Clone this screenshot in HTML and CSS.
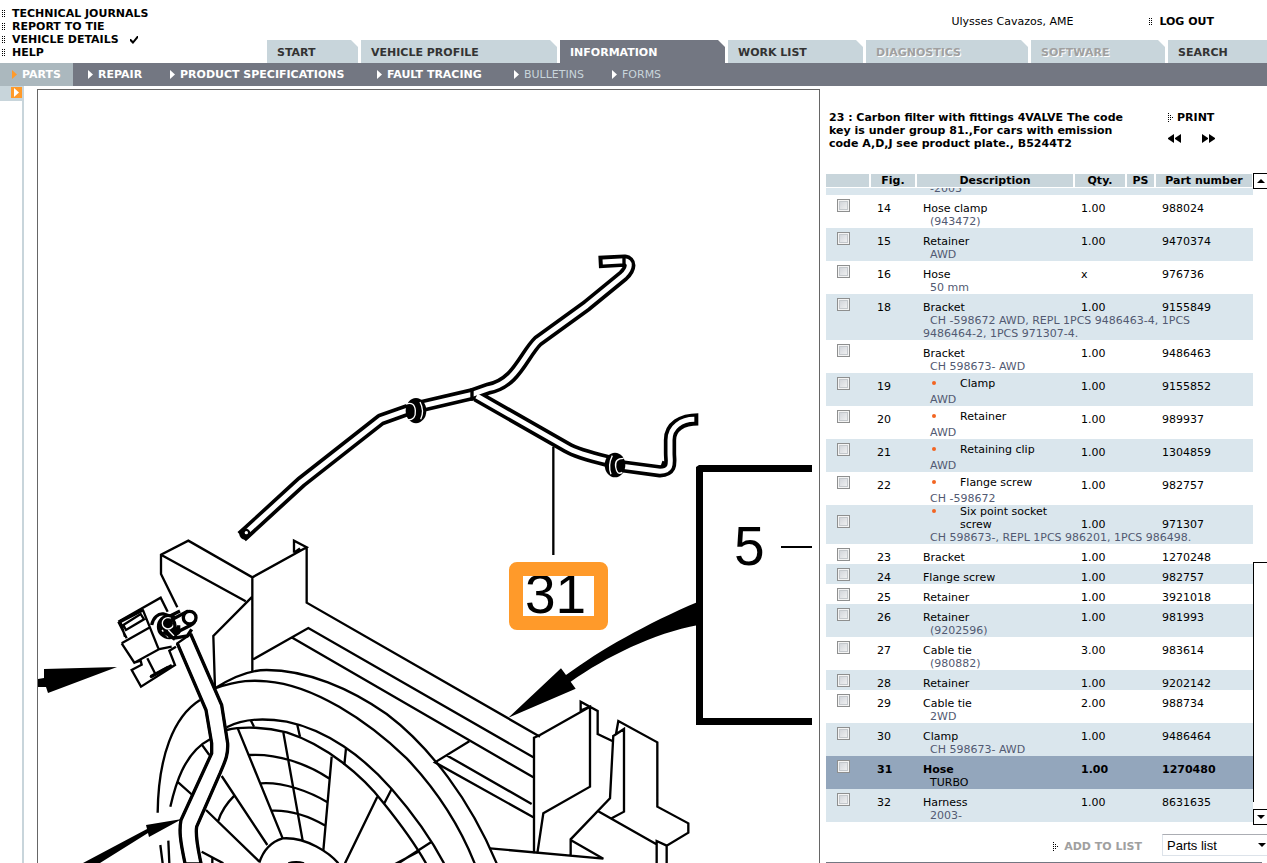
FILE: index.html
```html
<!DOCTYPE html>
<html lang="en">
<head>
<meta charset="utf-8">
<title>Parts information</title>
<link rel="stylesheet" href="styles.css">
</head>
<body>
<svg class="defs" aria-hidden="true">
  <symbol id="grip" viewBox="0 0 4 8"><path d="M0 0h1v1H0zM2 0h1v1H2zM0 2h1v1H0zM2 2h1v1H2zM0 4h1v1H0zM2 4h1v1H2zM0 6h1v1H0zM2 6h1v1H2z"/></symbol>
  <symbol id="dots" viewBox="0 0 5 9"><path d="M0 0h1v1H0zM0 2h1v1H0zM2 2h1v1H2zM0 4h1v1H0zM2 4h1v1H2zM4 4h1v1H4zM0 6h1v1H0zM2 6h1v1H2zM0 8h1v1H0z"/></symbol>
  <symbol id="play" viewBox="0 0 5 9"><path d="M0 0l5 4.5L0 9z"/></symbol>
</svg>

<header class="top">
  <ul class="links">
    <li><svg class="grip"><use href="#grip"/></svg><a href="#">TECHNICAL JOURNALS</a></li>
    <li><svg class="grip"><use href="#grip"/></svg><a href="#">REPORT TO TIE</a></li>
    <li><svg class="grip"><use href="#grip"/></svg><a href="#">VEHICLE DETAILS</a><svg class="tick" viewBox="0 0 8 8"><path d="M0 3h1l2 2 4-5h1v2L3 8 0 5z"/></svg></li>
    <li><svg class="grip"><use href="#grip"/></svg><a href="#">HELP</a></li>
  </ul>
  <div class="top-main">
    <div class="user">
      <span>Ulysses Cavazos, AME</span>
      <a class="logout" href="#"><svg class="grip"><use href="#grip"/></svg>LOG OUT</a>
    </div>
    <nav class="tabs">
      <a class="tab" href="#">START</a>
      <a class="tab" href="#">VEHICLE PROFILE</a>
      <a class="tab current" href="#">INFORMATION</a>
      <a class="tab" href="#">WORK LIST</a>
      <a class="tab off" href="#">DIAGNOSTICS</a>
      <a class="tab off" href="#">SOFTWARE</a>
      <a class="tab last" href="#">SEARCH</a>
    </nav>
  </div>
</header>

<nav class="subnav">
  <a class="active" href="#"><svg class="play"><use href="#play"/></svg>PARTS</a>
  <a class="repair" href="#"><svg class="play"><use href="#play"/></svg>REPAIR</a>
  <a class="specs" href="#"><svg class="play"><use href="#play"/></svg>PRODUCT SPECIFICATIONS</a>
  <a class="faults" href="#"><svg class="play"><use href="#play"/></svg>FAULT TRACING</a>
  <a class="bulletins off" href="#"><svg class="play"><use href="#play"/></svg>BULLETINS</a>
  <a class="off" href="#"><svg class="play"><use href="#play"/></svg>FORMS</a>
</nav>

<main class="content">
  <div class="rail"><div class="rail-head"><button class="expand" aria-label="Expand"><svg class="play"><use href="#play"/></svg></button></div></div>

  <section class="drawing">
    <svg viewBox="38 90 781 773" role="img" aria-label="Parts drawing">
      <!-- carrier frame, fan and bracket -->
      <g class="line" transform="translate(100 530) scale(.33333)">
        <path d="M232 232L183 132V74L265 32L457 142L620 52L582 32V68M183 74L437 214M457 142V425M457 200L340 318L345 475M620 52V218L1320 620M460 388L625 294L1300 682M577 323L1300 742M582 68L600 55"/>
        <path d="M345 475C400 440 457 420 500 420C620 420 750 475 860 552C990 650 1110 810 1190 1000M345 475C420 450 460 450 500 454C640 465 800 570 920 685C1010 780 1080 890 1124 1000"/>
        <path d="M380 592C430 565 500 565 560 575C680 600 790 680 875 777C930 840 990 920 1032 1000M380 600C430 588 500 592 560 607C680 645 790 740 850 818C900 880 950 950 978 1000"/>
        <path d="M452 570L462 590M592 585L600 620M738 655L733 705M875 777L853 820M832 800L735 1000M995 935L895 1000M955 965L880 1005"/>
        <path d="M412 592L548 925M550 607L608 932M695 680L670 962M448 675C530 670 620 700 690 747M482 760C550 755 630 785 685 818M516 842C570 840 630 860 678 888"/>
        <path d="M365 738L502 945M318 840L478 995M403 797C375 825 362 850 355 872M478 998C490 960 515 935 548 925C620 920 690 970 715 1000M565 1000Q588 993 612 1000M305 965L370 1000M337 985V1000"/>
        <path d="M300 510C220 560 175 680 173 848M330 628C250 670 225 770 211 830M305 643L328 675M232 755L277 795M181 945L188 1000M205 932L208 1000"/>
        <!-- hose through the bracket -->
        <path class="white" d="M232 340L318 540L335 640V670L243 870C237 900 240 930 255 1000H303C295 960 285 920 290 890L360 730C372 700 385 680 383 640L365 525L272 312Z"/>
        <path class="bold" d="M232 340L318 540L335 640V670L243 870C237 900 240 930 255 1000M272 312L365 525L383 640C385 680 372 700 360 730L290 890C285 920 295 960 303 1000"/>
        <!-- valve -->
        <path d="M55 275L182 203L203 245M55 275L80 325M65 340L150 292M65 340L103 398L178 357L215 350M103 398L122 392L125 404L95 420L123 470L225 405L208 362L228 350M128 238L175 355M142 385L165 430M70 285L122 252L132 268L78 300ZM60 272L75 320M150 442L215 405"/>
        <path class="bold" d="M58 276L128 240M155 285C160 262 175 250 190 252L210 258L240 243M152 440L205 412"/>
        <circle class="blob" cx="208" cy="290" r="34"/>
        <circle class="ring" cx="204" cy="280" r="17"/>
        <path class="ring" d="M186 300L205 322M205 300L222 318M232 318L262 302"/>
        <path class="white bold" d="M218 268L262 244C290 244 292 276 272 286L232 306C220 298 232 286 218 268Z"/>
        <circle class="white bold" cx="269" cy="263" r="19"/>
        <path class="bold" d="M218 325L262 318L275 298M190 305L225 328M236 286V300"/>
      </g>
      <!-- right hand side brackets -->
      <g class="line" transform="translate(340 640) scale(.33333)">
        <path d="M582 640V293L600 285L750 200V440L610 520L592 640M722 215V185L773 213V282L817 303M722 212L750 200"/>
        <path d="M820 285L810 475L692 598V648M828 282L835 243L952 307V500L1045 550V578L980 617L950 603V669M820 288L852 267V515L815 535M772 512L948 612M980 617V669M692 600L790 656L450 625M388 304L285 367L580 532M322 347L575 492"/>
      </g>
      <!-- fuel hose assembly -->
      <g transform="translate(460 240) scale(.33333)">
        <path class="tube-edge" d="M416 66L494 62C512 64 514 84 490 107L380 197L235 302C190 345 170 430 85 446L36 463L-140 504L-238 539L-475 725L-655 890M50 468L320 622Q350 640 440 662L480 678L600 694C640 692 630 665 630 640V600C630 560 665 538 715 538"/>
        <path class="tube-core" d="M428 66L494 62C512 64 514 84 490 107L380 197L235 302C190 345 170 430 85 446L36 463L-140 504L-238 539L-475 725L-638 874M50 468L320 622Q350 640 440 662L480 678L600 694C640 692 630 665 630 640V600C630 560 665 538 703 538"/>
        <path class="cut" d="M492 45V80M36 446V482M606 682L612 664"/>
        <circle cx="-645" cy="882" r="17"/>
        <circle cx="-641" cy="878" r="5" fill="#fff"/>
        <g class="clamp" transform="translate(-132 512)"><ellipse rx="31" ry="38"/><path d="M-30-20Q-4-28-2 0T-24 28M12-26Q26 0 14 26"/></g>
        <g class="clamp" transform="translate(465 675)"><ellipse rx="31" ry="37"/><path d="M-8-28Q-22 0-12 28M26-20Q-2-20 2 6T22 22"/></g>
        <path class="leader" d="M280 620V945"/>
      </g>
      <!-- arrows -->
      <path d="M38 679L44 678V669L117 667L48 693L46 687H38ZM182 819L146 825L147 829L83 863H100L148 833L149 837Z"/>
      <g transform="translate(480 450) scale(.33333)"><path d="M655 455C500 520 360 600 258 675L243 655L85 803L287 716L272 695C380 620 520 550 655 525Z"/></g>
      <!-- call-outs -->
      <path d="M696 467L699 465H812V472H703V718H812V725H696ZM781 546H812V548H781Z"/>
      <text x="734" y="565">5</text>
      <text x="525" y="613">31</text>
      <rect class="mark" x="516" y="569" width="85" height="54" rx="1"/>
    </svg>
  </section>

  <aside class="panel">
    <div class="panel-head">
      <h1>23 : Carbon filter with fittings 4VALVE The code key is under group 81.,For cars with emission code A,D,J see product plate., B5244T2</h1>
      <div class="tools">
        <a href="#"><svg class="dots"><use href="#dots"/></svg>PRINT</a>
        <div class="steps">
          <button aria-label="Previous"><svg viewBox="0 0 13 9"><path d="M6 0v9L0 5V4zM13 0v9L7 5V4z"/></svg></button>
          <button aria-label="Next"><svg viewBox="0 0 13 9"><path d="M0 0l6 4v1L0 9zM7 0l6 4v1L7 9z"/></svg></button>
        </div>
      </div>
    </div>

    <div class="list">
      <table>
        <colgroup><col class="c-check"><col class="c-fig"><col class="c-desc"><col class="c-qty"><col class="c-ps"><col class="c-part"></colgroup>
        <thead><tr><th></th><th>Fig.</th><th>Description</th><th>Qty.</th><th>PS</th><th>Part number</th></tr></thead>
        <tbody class="alt"><tr class="cutoff"><td></td><td></td><td colspan="4"><div class="peek"><span>-2003</span></div></td></tr></tbody>
        <tbody><tr><td><input type="checkbox" aria-label="Select 988024"></td><td>14</td><td>Hose clamp</td><td>1.00</td><td></td><td>988024</td></tr><tr class="note"><td></td><td></td><td colspan="4">(943472)</td></tr></tbody>
        <tbody class="alt"><tr><td><input type="checkbox" aria-label="Select 9470374"></td><td>15</td><td>Retainer</td><td>1.00</td><td></td><td>9470374</td></tr><tr class="note"><td></td><td></td><td colspan="4">AWD</td></tr></tbody>
        <tbody><tr><td><input type="checkbox" aria-label="Select 976736"></td><td>16</td><td>Hose</td><td>x</td><td></td><td>976736</td></tr><tr class="note"><td></td><td></td><td colspan="4">50 mm</td></tr></tbody>
        <tbody class="alt"><tr><td><input type="checkbox" aria-label="Select 9155849"></td><td>18</td><td>Bracket</td><td>1.00</td><td></td><td>9155849</td></tr><tr class="note"><td></td><td></td><td colspan="4">CH -598672 AWD, REPL 1PCS 9486463-4, 1PCS<br>9486464-2, 1PCS 971307-4.</td></tr></tbody>
        <tbody><tr><td><input type="checkbox" aria-label="Select 9486463"></td><td></td><td>Bracket</td><td>1.00</td><td></td><td>9486463</td></tr><tr class="note"><td></td><td></td><td colspan="4">CH 598673- AWD</td></tr></tbody>
        <tbody class="alt"><tr><td><input type="checkbox" aria-label="Select 9155852"></td><td>19</td><td><div class="sub">Clamp</div></td><td>1.00</td><td></td><td>9155852</td></tr><tr class="note"><td></td><td></td><td colspan="4">AWD</td></tr></tbody>
        <tbody><tr><td><input type="checkbox" aria-label="Select 989937"></td><td>20</td><td><div class="sub">Retainer</div></td><td>1.00</td><td></td><td>989937</td></tr><tr class="note"><td></td><td></td><td colspan="4">AWD</td></tr></tbody>
        <tbody class="alt"><tr><td><input type="checkbox" aria-label="Select 1304859"></td><td>21</td><td><div class="sub">Retaining clip</div></td><td>1.00</td><td></td><td>1304859</td></tr><tr class="note"><td></td><td></td><td colspan="4">AWD</td></tr></tbody>
        <tbody><tr><td><input type="checkbox" aria-label="Select 982757"></td><td>22</td><td><div class="sub">Flange screw</div></td><td>1.00</td><td></td><td>982757</td></tr><tr class="note"><td></td><td></td><td colspan="4">CH -598672</td></tr></tbody>
        <tbody class="alt"><tr><td><input type="checkbox" aria-label="Select 971307"></td><td></td><td><div class="sub two">Six point socket screw</div></td><td>1.00</td><td></td><td>971307</td></tr><tr class="note"><td></td><td></td><td colspan="4">CH 598673-, REPL 1PCS 986201, 1PCS 986498.</td></tr></tbody>
        <tbody><tr><td><input type="checkbox" aria-label="Select 1270248"></td><td>23</td><td>Bracket</td><td>1.00</td><td></td><td>1270248</td></tr></tbody>
        <tbody class="alt"><tr><td><input type="checkbox" aria-label="Select 982757"></td><td>24</td><td>Flange screw</td><td>1.00</td><td></td><td>982757</td></tr></tbody>
        <tbody><tr><td><input type="checkbox" aria-label="Select 3921018"></td><td>25</td><td>Retainer</td><td>1.00</td><td></td><td>3921018</td></tr></tbody>
        <tbody class="alt"><tr><td><input type="checkbox" aria-label="Select 981993"></td><td>26</td><td>Retainer</td><td>1.00</td><td></td><td>981993</td></tr><tr class="note"><td></td><td></td><td colspan="4">(9202596)</td></tr></tbody>
        <tbody><tr><td><input type="checkbox" aria-label="Select 983614"></td><td>27</td><td>Cable tie</td><td>3.00</td><td></td><td>983614</td></tr><tr class="note"><td></td><td></td><td colspan="4">(980882)</td></tr></tbody>
        <tbody class="alt"><tr><td><input type="checkbox" aria-label="Select 9202142"></td><td>28</td><td>Retainer</td><td>1.00</td><td></td><td>9202142</td></tr></tbody>
        <tbody><tr><td><input type="checkbox" aria-label="Select 988734"></td><td>29</td><td>Cable tie</td><td>2.00</td><td></td><td>988734</td></tr><tr class="note"><td></td><td></td><td colspan="4">2WD</td></tr></tbody>
        <tbody class="alt"><tr><td><input type="checkbox" aria-label="Select 9486464"></td><td>30</td><td>Clamp</td><td>1.00</td><td></td><td>9486464</td></tr><tr class="note"><td></td><td></td><td colspan="4">CH 598673- AWD</td></tr></tbody>
        <tbody class="selected"><tr><td><input type="checkbox" aria-label="Select 1270480"></td><td>31</td><td>Hose</td><td>1.00</td><td></td><td>1270480</td></tr><tr class="note"><td></td><td></td><td colspan="4">TURBO</td></tr></tbody>
        <tbody class="alt"><tr><td><input type="checkbox" aria-label="Select 8631635"></td><td>32</td><td>Harness</td><td>1.00</td><td></td><td>8631635</td></tr><tr class="note"><td></td><td></td><td colspan="4">2003-</td></tr></tbody>
      </table>
      <div class="scroll">
        <button aria-label="Scroll up"><svg viewBox="0 0 8 4"><path d="M4 0l4 4H0z"/></svg></button>
        <div class="track"><div class="thumb"></div></div>
        <button aria-label="Scroll down"><svg viewBox="0 0 8 4"><path d="M0 0h8L4 4z"/></svg></button>
      </div>
    </div>

    <div class="actions">
      <a href="#"><svg class="dots"><use href="#dots"/></svg>ADD TO LIST</a>
      <label class="target"><select aria-label="Target list"><option>Parts list</option></select><svg viewBox="0 0 8 4"><path d="M0 0h8L4 4z"/></svg></label>
    </div>
  </aside>
</main>
</body>
</html>
```
FILE: styles.css
```css
* { box-sizing: border-box; }
html, body { height: 100%; }
body {
  margin: 0;
  display: flex;
  flex-direction: column;
  overflow: hidden;
  background: #fff;
  color: #000;
  font: 11px/13px Verdana, "DejaVu Sans", sans-serif;
}
a { color: inherit; text-decoration: none; }
button { padding: 0; border: 0; background: none; }
svg { display: block; flex: none; }
.defs { position: absolute; width: 0; height: 0; }
.grip { width: 4px; height: 8px; }
.dots { width: 5px; height: 9px; }
.play { width: 5px; height: 9px; fill: currentColor; }

.top { display: flex; flex: none; height: 63px; font-weight: bold; }
.links { flex: none; width: 267px; margin: 0; padding: 7px 0 0 2px; list-style: none; }
.links li { display: flex; align-items: center; gap: 6px; height: 13px; }
.tick { width: 8px; height: 8px; margin-left: 5px; }
.top-main { flex: 1; min-width: 0; display: flex; flex-direction: column; justify-content: space-between; }
.user { display: flex; justify-content: flex-end; gap: 76px; padding: 15px 53px 0 0; }
.user span { font-weight: normal; }
.logout { display: flex; align-items: center; gap: 6px; }
.tabs {
  display: grid;
  grid-template-columns: 91fr 196fr 165fr 135fr 162fr 134fr 99fr;
  gap: 3px;
  height: 23px;
}
.tab {
  min-width: 0;
  padding: 6px 0 0 10px;
  background: #c8d5db;
  color: #333;
  white-space: nowrap;
  clip-path: polygon(0 0, calc(100% - 7px) 0, 100% 7px, 100% 100%, 0 100%);
}
.tab.current { background: #737782; color: #fff; }
.tab.last { clip-path: none; }
.tab.off { color: #a0a0a0; text-shadow: 1px 1px #fff; }

.subnav { display: flex; flex: none; height: 23px; background: #737782; color: #fff; font-weight: bold; }
.subnav a { display: flex; align-items: center; gap: 5px; padding: 0 10px 1px 15px; white-space: nowrap; }
.subnav .active { min-width: 73px; padding-left: 12px; background: #abb8be; }
.subnav .active .play { fill: #ff9a2a; }
.subnav .repair { min-width: 82px; }
.subnav .specs { min-width: 207px; }
.subnav .faults { min-width: 137px; }
.subnav .bulletins { min-width: 98px; }
.subnav .off { font-weight: normal; color: #c8d5db; }
.subnav .off .play { fill: #fff; }

.content { display: flex; flex: 1; min-height: 0; }
.rail { flex: none; width: 24px; border-right: 2px solid #c8d5db; }
.rail-head { display: flex; justify-content: flex-end; height: 15px; padding-top: 1px; background: #c8d5db; }
.expand { display: flex; align-items: center; justify-content: center; width: 11px; height: 11px; background: #ff9a2a; color: #fff; }

.drawing { flex: 1; min-width: 0; margin: 3px 6px 0 13px; border: 1px solid #666; border-bottom: 0; overflow: hidden; }
.drawing svg { width: 100%; height: auto; }
.drawing text { font: 55px "Liberation Sans", Arial, sans-serif; }
.line { fill: none; stroke: #000; stroke-width: 7; }
.line .bold { stroke-width: 10; }
.line .white { fill: #fff; }
.line .blob { fill: #000; }
.line .ring { stroke: #fff; stroke-width: 4; }
.tube-edge { fill: none; stroke: #000; stroke-width: 37; stroke-linejoin: round; }
.tube-core { fill: none; stroke: #fff; stroke-width: 15; stroke-linejoin: round; }
.cut { fill: none; stroke: #000; stroke-width: 10; }
.clamp path { fill: none; stroke: #fff; stroke-width: 4; }
.leader { stroke: #000; stroke-width: 7; }
.mark { fill: none; stroke: #ff9a2a; stroke-width: 14; stroke-linejoin: round; }

.panel { flex: none; width: 441px; }
.panel-head { display: flex; justify-content: space-between; height: 87px; padding: 25px 52px 0 3px; }
.panel-head h1 { width: 310px; margin: 0; font-size: inherit; }
.tools { font-weight: bold; }
.tools a { display: flex; align-items: center; gap: 4px; }
.steps { display: flex; gap: 21px; margin-top: 10px; }
.steps svg { width: 13px; height: 9px; }

.list { display: flex; align-items: flex-start; }
table { flex: none; width: 427px; margin-top: 1px; table-layout: fixed; border-spacing: 0; }
.c-check { width: 45px; }
.c-fig { width: 46px; }
.c-desc { width: 158px; }
.c-qty { width: 52px; }
.c-ps { width: 29px; }
.c-part { width: 97px; }
th { height: 14px; padding: 0; background: #c8d5db; border: solid #fff; border-width: 0 2px 1px 0; white-space: nowrap; }
th:last-child { border-right-width: 1px; }
td { height: 20px; padding: 0 0 0 6px; vertical-align: bottom; }
td:first-child { padding: 0 0 3px 11px; }
.alt { background: #dae6ed; }
.selected { background: #93a6bc; font-weight: bold; }
.note td { height: 13px; padding-bottom: 0; color: #525a72; text-indent: 7px; }
.note td:first-child { padding: 0; }
.selected .note td { font-weight: normal; color: #000; }
.cutoff td, .cutoff td:first-child { height: 7px; padding: 0 0 0 13px; color: #525a72; }
.peek { display: flex; align-items: flex-end; height: 7px; overflow: hidden; }
.sub { position: relative; padding: 0 8px 3px 37px; }
.sub.two { padding-bottom: 0; }
.sub::before { content: ""; position: absolute; left: 9px; top: 4px; width: 4px; height: 4px; border-radius: 2px; background: #f26522; }
input[type="checkbox"] {
  appearance: none;
  display: block;
  width: 13px;
  height: 13px;
  margin: 0;
  border: 1px solid #8e8f8f;
  background: linear-gradient(135deg, #cbcfd5, #f6f6f6);
  box-shadow: inset 0 0 0 1px #f4f4f4, inset 0 0 0 2px #c4c8cc;
}

.scroll { display: flex; flex-direction: column; flex: 1; min-width: 0; align-self: stretch; height: 652px; overflow: hidden; }
.scroll button { flex: none; display: flex; align-items: center; justify-content: center; width: 16px; height: 16px; border: 1px solid #000; }
.scroll svg { width: 8px; height: 4px; }
.track { flex: 1; padding: 373px 0 7px; }
.thumb { width: 16px; height: 100%; border: 1px solid #000; border-bottom: 0; }

.actions { display: flex; justify-content: flex-end; align-items: flex-start; gap: 20px; height: 38px; margin-right: 5px; padding-top: 9px; border-bottom: 1px solid #737782; }
.actions a { display: flex; align-items: center; gap: 6px; padding-top: 6px; font-weight: bold; color: #a0a0a0; }
.target { position: relative; flex: none; width: 105px; margin-right: -5px; }
.target select { appearance: none; display: block; width: 100%; height: 22px; padding: 0 4px; border: 1px solid #dde3ea; border-top-color: #abadb3; border-right: 0; border-radius: 0; background: #fff; color: #000; font: 13px "Liberation Sans", Arial, sans-serif; }
.target svg { position: absolute; right: 1px; top: 9px; width: 8px; height: 4px; pointer-events: none; }
```
